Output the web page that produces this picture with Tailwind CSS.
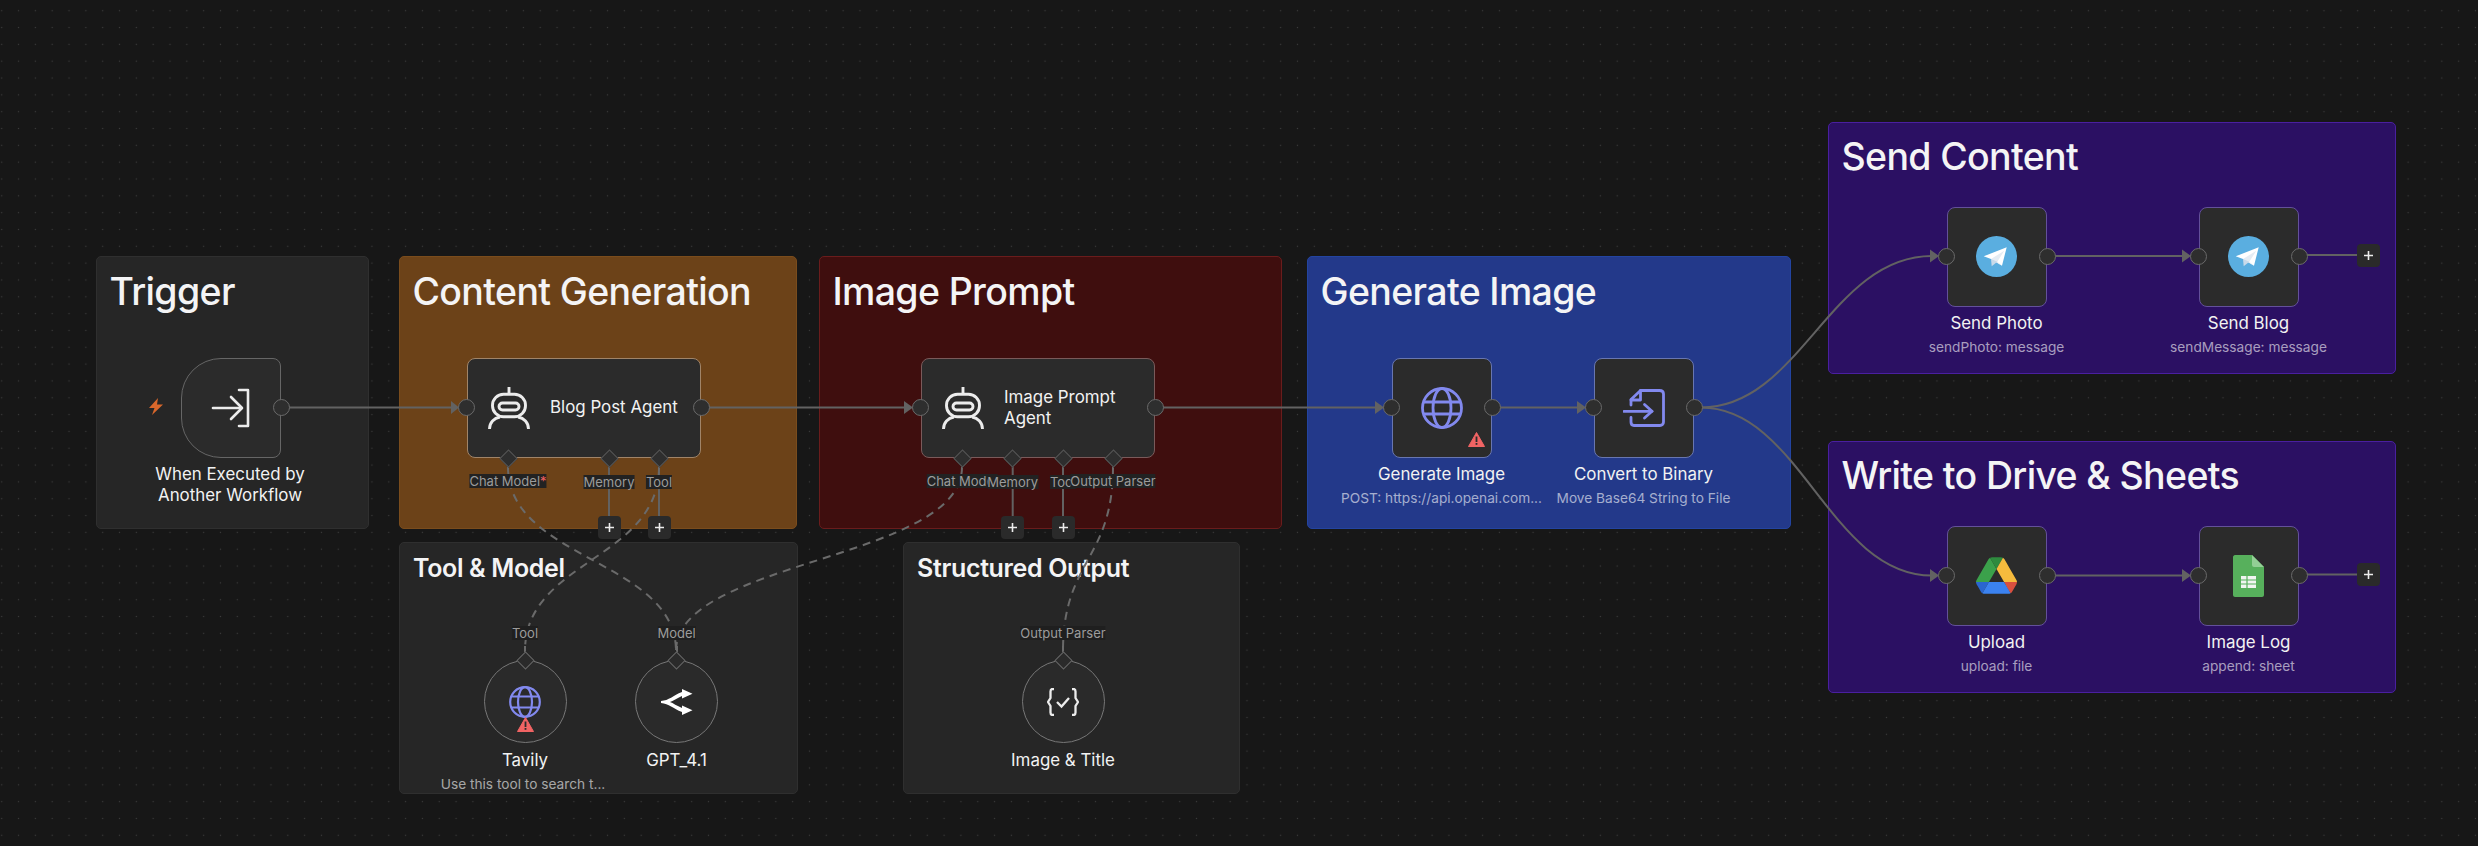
<!DOCTYPE html>
<html>
<head>
<meta charset="utf-8">
<script src="https://cdn.jsdelivr.net/npm/@tailwindcss/browser@4"></script>
</head>
<body class="m-0 bg-[#171717]">
<div class="relative w-[2478px] h-[846px] overflow-hidden antialiased bg-[#171717] font-['Inter',sans-serif] bg-[radial-gradient(circle,#3c3c3c_0.9px,transparent_1px)] bg-[size:16.83px_16.83px] bg-[position:-6.7px_2.3px]">

  <!-- groups -->
  <div class="absolute left-[96px] top-[256px] w-[273px] h-[273px] rounded-[5px] bg-[#262626] border border-[#2f2f2f] px-[12.5px] pt-[12px]"><h1 class="text-[37.5px] leading-[45px] font-[550] tracking-[-0.65px] text-[#f4f4f5]">Trigger</h1></div>
  <div class="absolute left-[399px] top-[256px] w-[398px] h-[273px] rounded-[5px] bg-[#6c4218] border border-[#7a4c1c] px-[12.5px] pt-[12px]"><h1 class="text-[37.5px] leading-[45px] font-[550] tracking-[-0.65px] text-[#f4f4f5]">Content Generation</h1></div>
  <div class="absolute left-[819px] top-[256px] w-[463px] h-[273px] rounded-[5px] bg-[#3f0e0e] border border-[#6a1c1c] px-[12.5px] pt-[12px]"><h1 class="text-[37.5px] leading-[45px] font-[550] tracking-[-0.65px] text-[#f4f4f5]">Image Prompt</h1></div>
  <div class="absolute left-[1307px] top-[256px] w-[484px] h-[273px] rounded-[5px] bg-[#23398a] border border-[#2344a0] px-[12.5px] pt-[12px]"><h1 class="text-[37.5px] leading-[45px] font-[550] tracking-[-0.65px] text-[#f4f4f5]">Generate Image</h1></div>
  <div class="absolute left-[1828px] top-[122px] w-[568px] h-[252px] rounded-[5px] bg-[#2b1063] border border-[#4a1fa0] px-[12.5px] pt-[11px]"><h1 class="text-[37.5px] leading-[45px] font-[550] tracking-[-0.65px] text-[#f4f4f5]">Send Content</h1></div>
  <div class="absolute left-[1828px] top-[441px] w-[568px] h-[252px] rounded-[5px] bg-[#2b1063] border border-[#4a1fa0] px-[12.5px] pt-[11px]"><h1 class="text-[37.5px] leading-[45px] font-[550] tracking-[-0.65px] text-[#f4f4f5]">Write to Drive &amp; Sheets</h1></div>
  <div class="absolute left-[399px] top-[542px] w-[399px] h-[252px] rounded-[5px] bg-[#262626] border border-[#2f2f2f] px-[13px] pt-[9px]"><h2 class="text-[25px] leading-[32px] font-semibold tracking-[-0.35px] text-[#f4f4f5]">Tool &amp; Model</h2></div>
  <div class="absolute left-[903px] top-[542px] w-[337px] h-[252px] rounded-[5px] bg-[#262626] border border-[#2f2f2f] px-[13px] pt-[9px]"><h2 class="text-[25px] leading-[32px] font-semibold tracking-[-0.35px] text-[#f4f4f5]">Structured Output</h2></div>

  <!-- edges -->
  <svg class="absolute left-0 top-0" width="2478" height="846" viewBox="0 0 2478 846" fill="none">
    <g stroke="#626262" stroke-width="2">
      <path d="M281 407.5H452"/>
      <path d="M701 407.5H906"/>
      <path d="M1155 407.5H1376"/>
      <path d="M1491 407.5H1578"/>
      <path d="M1701 407.5C1800 407.5 1830 256 1932 256"/>
      <path d="M1701 407.5C1800 407.5 1830 575.5 1932 575.5"/>
      <path d="M2046 256H2184"/>
      <path d="M2046 575.5H2184"/>
      <path d="M2299 255H2358"/>
      <path d="M2299 574.5H2358"/>
      <path d="M609 467V517"/><path d="M659 467V517"/>
      <path d="M1012.7 467V517"/><path d="M1063 467V517"/>
      <g stroke-dasharray="8 6" stroke="#6a6a6a">
        <path d="M508 467C508 560 676 560 676 651"/>
        <path d="M659 467C659 560 525 560 525 651"/>
        <path d="M962 467C962 560 676 560 676 651"/>
        <path d="M1113 467C1113 560 1063 560 1063 651"/>
      </g>
    </g>
    <g fill="#626262">
      <path d="M451 401L459 407.5L451 414Z"/>
      <path d="M904 401L913 407.5L904 414Z"/>
      <path d="M1375 401L1384 407.5L1375 414Z"/>
      <path d="M1577 401L1586 407.5L1577 414Z"/>
      <path d="M1930 249.5L1939 256L1930 262.5Z"/>
      <path d="M1930 569L1939 575.5L1930 582Z"/>
      <path d="M2182 249.5L2191 256L2182 262.5Z"/>
      <path d="M2182 569L2191 575.5L2182 582Z"/>
    </g>
  </svg>

  <!-- trigger -->
  <svg class="absolute left-[147.5px] top-[398px]" width="16" height="17" viewBox="0 0 16 17"><path d="M10 0L1 10H6.5L4 17L15 6.5H9Z" fill="#d9672b"/></svg>
  <div class="absolute left-[180.5px] top-[357.5px] w-[100.5px] h-[100px] flex items-center justify-center bg-[#2b2b2b] border-[1.5px] border-[#666] rounded-l-[40px] rounded-r-[8px]">
    <svg width="40" height="40" viewBox="0 0 40 40" fill="none" stroke="#ececec" stroke-width="2.6" stroke-linecap="round" stroke-linejoin="round"><path d="M2 20H29"/><path d="M20 9L31 20L20 31"/><path d="M28 2H37V38H28"/></svg>
    <span class="absolute right-[-10px] top-[40.5px] w-[17px] h-[17px] rounded-full bg-[#2e2e2e] border border-[#6a6a6a]"></span>
  </div>
  <div class="absolute left-[110px] top-[464px] w-[240px] text-center text-[16.9px] leading-[21px] text-[#f2f2f2]">When Executed by<br>Another Workflow</div>

  <!-- blog agent -->
  <div class="absolute left-[467px] top-[357.5px] w-[234px] h-[100px] flex items-center bg-[#2b2b2b] border-[1.5px] border-[#a08468] rounded-[8px]">
    <svg class="ml-[20px]" width="42" height="42" viewBox="0 0 42 42" fill="none" stroke="#ececec" stroke-width="2.9"><path d="M21 0V6"/><rect x="4.5" y="7.2" width="33" height="22.5" rx="11"/><rect x="11" y="16" width="20" height="7" rx="3.5"/><path d="M1.5 42C1.5 35.5 6 31 12 30"/><path d="M40.5 42C40.5 35.5 36 31 30 30"/></svg>
    <span class="ml-[20px] text-[16.9px] leading-[21px] text-[#f2f2f2]">Blog Post Agent</span>
    <span class="absolute left-[-10px] top-[40.5px] w-[17px] h-[17px] rounded-full bg-[#2e2e2e] border border-[#6a6a6a]"></span>
    <span class="absolute right-[-10px] top-[40.5px] w-[17px] h-[17px] rounded-full bg-[#2e2e2e] border border-[#6a6a6a]"></span>
  </div>
  <!-- image agent -->
  <div class="absolute left-[921px] top-[357.5px] w-[234px] h-[100px] flex items-center bg-[#2b2b2b] border-[1.5px] border-[#7a5a5a] rounded-[8px]">
    <svg class="ml-[20px]" width="42" height="42" viewBox="0 0 42 42" fill="none" stroke="#ececec" stroke-width="2.9"><path d="M21 0V6"/><rect x="4.5" y="7.2" width="33" height="22.5" rx="11"/><rect x="11" y="16" width="20" height="7" rx="3.5"/><path d="M1.5 42C1.5 35.5 6 31 12 30"/><path d="M40.5 42C40.5 35.5 36 31 30 30"/></svg>
    <span class="ml-[20px] text-[16.9px] leading-[21px] text-[#f2f2f2]">Image Prompt<br>Agent</span>
    <span class="absolute left-[-10px] top-[40.5px] w-[17px] h-[17px] rounded-full bg-[#2e2e2e] border border-[#6a6a6a]"></span>
    <span class="absolute right-[-10px] top-[40.5px] w-[17px] h-[17px] rounded-full bg-[#2e2e2e] border border-[#6a6a6a]"></span>
  </div>

  <!-- diamonds -->
  <span class="absolute left-[501.5px] top-[451.5px] w-[13px] h-[13px] rotate-45 bg-[#2e2e2e] border border-[#555]"></span>
  <span class="absolute left-[602.5px] top-[451.5px] w-[13px] h-[13px] rotate-45 bg-[#2e2e2e] border border-[#555]"></span>
  <span class="absolute left-[652.5px] top-[451.5px] w-[13px] h-[13px] rotate-45 bg-[#2e2e2e] border border-[#555]"></span>
  <span class="absolute left-[955.5px] top-[451.5px] w-[13px] h-[13px] rotate-45 bg-[#2e2e2e] border border-[#555]"></span>
  <span class="absolute left-[1006px] top-[451.5px] w-[13px] h-[13px] rotate-45 bg-[#2e2e2e] border border-[#555]"></span>
  <span class="absolute left-[1056.5px] top-[451.5px] w-[13px] h-[13px] rotate-45 bg-[#2e2e2e] border border-[#555]"></span>
  <span class="absolute left-[1106.5px] top-[451.5px] w-[13px] h-[13px] rotate-45 bg-[#2e2e2e] border border-[#555]"></span>

  <!-- port labels -->
  <span class="absolute left-[508px] top-[474px] -translate-x-1/2 whitespace-nowrap bg-[#222] text-[13px] leading-[14px] text-[#9c9c9c]">Chat Model<span class="text-[#f16060]">*</span></span>
  <span class="absolute left-[609px] top-[475px] -translate-x-1/2 whitespace-nowrap bg-[#222] text-[13px] leading-[14px] text-[#9c9c9c]">Memory</span>
  <span class="absolute left-[659px] top-[475px] -translate-x-1/2 whitespace-nowrap bg-[#222] text-[13px] leading-[14px] text-[#9c9c9c]">Tool</span>
  <span class="absolute left-[962px] top-[474px] -translate-x-1/2 whitespace-nowrap bg-[#222] text-[13px] leading-[14px] text-[#9c9c9c]">Chat Model</span>
  <span class="absolute left-[1012.7px] top-[475px] -translate-x-1/2 whitespace-nowrap bg-[#222] text-[13px] leading-[14px] text-[#9c9c9c]">Memory</span>
  <span class="absolute left-[1063px] top-[475px] -translate-x-1/2 whitespace-nowrap bg-[#222] text-[13px] leading-[14px] text-[#9c9c9c]">Tool</span>
  <span class="absolute left-[1113px] top-[474px] -translate-x-1/2 whitespace-nowrap bg-[#222] text-[13px] leading-[14px] text-[#9c9c9c]">Output Parser</span>

  <!-- plus boxes -->
  <div class="absolute left-[597.5px] top-[516px] w-[23px] h-[23px] rounded-[4px] bg-[#2a2a2a] flex items-center justify-center"><svg width="11" height="11" viewBox="0 0 11 11" stroke="#ececec" stroke-width="1.6"><path d="M5.5 1V10M1 5.5H10"/></svg></div>
  <div class="absolute left-[647.5px] top-[516px] w-[23px] h-[23px] rounded-[4px] bg-[#2a2a2a] flex items-center justify-center"><svg width="11" height="11" viewBox="0 0 11 11" stroke="#ececec" stroke-width="1.6"><path d="M5.5 1V10M1 5.5H10"/></svg></div>
  <div class="absolute left-[1001px] top-[516px] w-[23px] h-[23px] rounded-[4px] bg-[#2a2a2a] flex items-center justify-center"><svg width="11" height="11" viewBox="0 0 11 11" stroke="#ececec" stroke-width="1.6"><path d="M5.5 1V10M1 5.5H10"/></svg></div>
  <div class="absolute left-[1051.5px] top-[516px] w-[23px] h-[23px] rounded-[4px] bg-[#2a2a2a] flex items-center justify-center"><svg width="11" height="11" viewBox="0 0 11 11" stroke="#ececec" stroke-width="1.6"><path d="M5.5 1V10M1 5.5H10"/></svg></div>
  <div class="absolute left-[2357px] top-[243.5px] w-[23px] h-[23px] rounded-[4px] bg-[#2a2a2a] flex items-center justify-center"><svg width="11" height="11" viewBox="0 0 11 11" stroke="#ececec" stroke-width="1.6"><path d="M5.5 1V10M1 5.5H10"/></svg></div>
  <div class="absolute left-[2357px] top-[563px] w-[23px] h-[23px] rounded-[4px] bg-[#2a2a2a] flex items-center justify-center"><svg width="11" height="11" viewBox="0 0 11 11" stroke="#ececec" stroke-width="1.6"><path d="M5.5 1V10M1 5.5H10"/></svg></div>

  <!-- generate image -->
  <div class="absolute left-[1391.5px] top-[357.5px] w-[100px] h-[100px] flex items-center justify-center bg-[#2b2b2b] border-[1.5px] border-[#6876b0] rounded-[8px]">
    <svg width="42" height="42" viewBox="0 0 42 42" fill="none" stroke="#8289ee" stroke-width="2.8"><circle cx="21" cy="21" r="19.5"/><ellipse cx="21" cy="21" rx="9" ry="19.5"/><path d="M2 15H40M2 27H40"/></svg>
    <svg class="absolute left-[75px] top-[73px]" width="17" height="15" viewBox="0 0 17 15"><path d="M8.5 0.5L16.5 14.5H0.5Z" fill="#f16464" stroke="#f16464" stroke-linejoin="round"/><rect x="7.6" y="4.5" width="1.8" height="5.5" fill="#2b2b2b"/><rect x="7.6" y="11" width="1.8" height="1.8" fill="#2b2b2b"/></svg>
    <span class="absolute left-[-10px] top-[40.5px] w-[17px] h-[17px] rounded-full bg-[#2e2e2e] border border-[#6a6a6a]"></span>
    <span class="absolute right-[-10px] top-[40.5px] w-[17px] h-[17px] rounded-full bg-[#2e2e2e] border border-[#6a6a6a]"></span>
  </div>
  <div class="absolute left-[1321px] top-[464px] w-[241px] text-center text-[16.9px] leading-[21px] text-[#f2f2f2]">Generate Image</div>
  <div class="absolute left-[1321px] top-[489px] w-[241px] text-center text-[13.7px] leading-[18px] text-white/60">POST: https://api.openai.com...</div>

  <!-- convert -->
  <div class="absolute left-[1593.5px] top-[357.5px] w-[100px] h-[100px] flex items-center justify-center bg-[#2b2b2b] border-[1.5px] border-[#6876b0] rounded-[8px]">
    <svg width="42" height="38" viewBox="0 0 42 38" fill="none" stroke="#8289ee" stroke-width="2.8" stroke-linejoin="round" stroke-linecap="round"><path d="M8 16V10.5L17.5 1.5H36.5C39 1.5 40.5 3 40.5 5V33C40.5 35 39 36.5 37 36.5H11C9 36.5 8 35 8 33V28.5"/><path d="M8 11H17.5V1.5"/><path d="M1 22.3H29"/><path d="M21.5 15.5L29 22.3L21.5 29"/></svg>
    <span class="absolute left-[-10px] top-[40.5px] w-[17px] h-[17px] rounded-full bg-[#2e2e2e] border border-[#6a6a6a]"></span>
    <span class="absolute right-[-10px] top-[40.5px] w-[17px] h-[17px] rounded-full bg-[#2e2e2e] border border-[#6a6a6a]"></span>
  </div>
  <div class="absolute left-[1523px] top-[464px] w-[241px] text-center text-[16.9px] leading-[21px] text-[#f2f2f2]">Convert to Binary</div>
  <div class="absolute left-[1523px] top-[489px] w-[241px] text-center text-[13.7px] leading-[18px] text-white/60">Move Base64 String to File</div>

  <!-- send photo -->
  <div class="absolute left-[1946.5px] top-[206.5px] w-[100px] h-[100px] flex items-center justify-center bg-[#2b2b2b] border-[1.5px] border-[#63509a] rounded-[8px]">
    <svg width="41" height="41" viewBox="0 0 41 41"><circle cx="20.5" cy="20.5" r="20.5" fill="#5aaee0"/><path d="M30.7 11.3L7.7 20.3L15 23L26 29.7Z" fill="#fff"/><path d="M15 23L28.3 14.7L21.3 25.7L26 29.7Z" fill="#e4ecf3"/><path d="M15 23L15.7 30.3L21.3 25.7Z" fill="#c8daea"/></svg>
    <span class="absolute left-[-10px] top-[40.5px] w-[17px] h-[17px] rounded-full bg-[#2e2e2e] border border-[#6a6a6a]"></span>
    <span class="absolute right-[-10px] top-[40.5px] w-[17px] h-[17px] rounded-full bg-[#2e2e2e] border border-[#6a6a6a]"></span>
  </div>
  <div class="absolute left-[1876px] top-[313px] w-[241px] text-center text-[16.9px] leading-[21px] text-[#f2f2f2]">Send Photo</div>
  <div class="absolute left-[1876px] top-[338px] w-[241px] text-center text-[13.7px] leading-[18px] text-white/60">sendPhoto: message</div>

  <!-- send blog -->
  <div class="absolute left-[2198.8px] top-[206.5px] w-[100px] h-[100px] flex items-center justify-center bg-[#2b2b2b] border-[1.5px] border-[#63509a] rounded-[8px]">
    <svg width="41" height="41" viewBox="0 0 41 41"><circle cx="20.5" cy="20.5" r="20.5" fill="#5aaee0"/><path d="M30.7 11.3L7.7 20.3L15 23L26 29.7Z" fill="#fff"/><path d="M15 23L28.3 14.7L21.3 25.7L26 29.7Z" fill="#e4ecf3"/><path d="M15 23L15.7 30.3L21.3 25.7Z" fill="#c8daea"/></svg>
    <span class="absolute left-[-10px] top-[40.5px] w-[17px] h-[17px] rounded-full bg-[#2e2e2e] border border-[#6a6a6a]"></span>
    <span class="absolute right-[-10px] top-[40.5px] w-[17px] h-[17px] rounded-full bg-[#2e2e2e] border border-[#6a6a6a]"></span>
  </div>
  <div class="absolute left-[2128px] top-[313px] w-[241px] text-center text-[16.9px] leading-[21px] text-[#f2f2f2]">Send Blog</div>
  <div class="absolute left-[2128px] top-[338px] w-[241px] text-center text-[13.7px] leading-[18px] text-white/60">sendMessage: message</div>

  <!-- upload -->
  <div class="absolute left-[1946.5px] top-[525.5px] w-[100px] h-[100px] flex items-center justify-center bg-[#2b2b2b] border-[1.5px] border-[#63509a] rounded-[8px]">
    <svg width="41" height="37" viewBox="0 0 87.3 78"><path d="m6.6 66.85 3.85 6.65c.8 1.4 1.95 2.5 3.3 3.3l13.75-23.8h-27.5c0 1.55.4 3.1 1.2 4.5z" fill="#2a66d0"/><path d="m43.65 25-13.75-23.8c-1.35.8-2.5 1.9-3.3 3.3l-25.4 44a9.06 9.06 0 0 0 -1.2 4.5h27.5z" fill="#3ba14b"/><path d="m73.55 76.8c1.35-.8 2.5-1.9 3.3-3.3l1.6-2.75 7.65-13.25c.8-1.4 1.2-2.95 1.2-4.5h-27.502l5.852 11.5z" fill="#d9503f"/><path d="m43.65 25 13.75-23.8c-1.35-.8-2.9-1.2-4.5-1.2h-18.5c-1.6 0-3.15.45-4.5 1.2z" fill="#2e8b3e"/><path d="m59.8 53h-32.3l-13.75 23.8c1.35.8 2.9 1.2 4.5 1.2h50.8c1.6 0 3.15-.45 4.5-1.2z" fill="#3b82f0"/><path d="m73.4 26.5-12.7-22c-.8-1.4-1.95-2.5-3.3-3.3l-13.75 23.8 16.15 28h27.45c0-1.55-.4-3.1-1.2-4.5z" fill="#f6bb3d"/></svg>
    <span class="absolute left-[-10px] top-[40.5px] w-[17px] h-[17px] rounded-full bg-[#2e2e2e] border border-[#6a6a6a]"></span>
    <span class="absolute right-[-10px] top-[40.5px] w-[17px] h-[17px] rounded-full bg-[#2e2e2e] border border-[#6a6a6a]"></span>
  </div>
  <div class="absolute left-[1876px] top-[632px] w-[241px] text-center text-[16.9px] leading-[21px] text-[#f2f2f2]">Upload</div>
  <div class="absolute left-[1876px] top-[657px] w-[241px] text-center text-[13.7px] leading-[18px] text-white/60">upload: file</div>

  <!-- image log -->
  <div class="absolute left-[2198.8px] top-[525.5px] w-[100px] h-[100px] flex items-center justify-center bg-[#2b2b2b] border-[1.5px] border-[#63509a] rounded-[8px]">
    <svg width="31" height="42" viewBox="0 0 31 42"><path d="M2 0H19L31 12V40C31 41 30 42 29 42H2C1 42 0 41 0 40V2C0 1 1 0 2 0Z" fill="#57b05c"/><path d="M19 0L31 12H21C20 12 19 11 19 10Z" fill="#93cf95"/><path d="M8 21H23V33H8Z" fill="#f1f5f1"/><path d="M8 25H23M8 29H23M14 21V33" stroke="#57b05c" stroke-width="1.2"/></svg>
    <span class="absolute left-[-10px] top-[40.5px] w-[17px] h-[17px] rounded-full bg-[#2e2e2e] border border-[#6a6a6a]"></span>
    <span class="absolute right-[-10px] top-[40.5px] w-[17px] h-[17px] rounded-full bg-[#2e2e2e] border border-[#6a6a6a]"></span>
  </div>
  <div class="absolute left-[2128px] top-[632px] w-[241px] text-center text-[16.9px] leading-[21px] text-[#f2f2f2]">Image Log</div>
  <div class="absolute left-[2128px] top-[657px] w-[241px] text-center text-[13.7px] leading-[18px] text-white/60">append: sheet</div>

  <!-- tavily -->
  <span class="absolute left-[525px] top-[626px] -translate-x-1/2 whitespace-nowrap bg-[#1f1f1f] text-[13px] leading-[14px] text-[#9c9c9c]">Tool</span>
  <span class="absolute left-[524px] top-[646px] w-[2px] h-[6px] bg-[#6a6a6a]"></span>
  <div class="absolute left-[483.5px] top-[660px] w-[83px] h-[83px] rounded-full flex items-center justify-center bg-[#2a2a2a] border-[1.5px] border-[#777]">
    <svg width="32" height="32" viewBox="0 0 32 32" fill="none" stroke="#8289ee" stroke-width="2.2"><circle cx="16" cy="16" r="14.8"/><ellipse cx="16" cy="16" rx="7" ry="14.8"/><path d="M2 10.5H30M2 21.5H30"/></svg>
    <svg class="absolute left-[32.5px] top-[56px]" width="17" height="15" viewBox="0 0 17 15"><path d="M8.5 0.5L16.5 14.5H0.5Z" fill="#f16464" stroke="#f16464" stroke-linejoin="round"/><rect x="7.6" y="4.5" width="1.8" height="5.5" fill="#2b2b2b"/><rect x="7.6" y="11" width="1.8" height="1.8" fill="#2b2b2b"/></svg>
  </div>
  <span class="absolute left-[518.5px] top-[653.5px] w-[13px] h-[13px] rotate-45 bg-[#2a2a2a] border border-[#666]"></span>
  <div class="absolute left-[405px] top-[750px] w-[240px] text-center text-[16.9px] leading-[21px] text-[#f2f2f2]">Tavily</div>
  <div class="absolute left-[403px] top-[775px] w-[240px] text-center text-[13.7px] leading-[18px] text-white/60">Use this tool to search t...</div>

  <!-- gpt -->
  <span class="absolute left-[676.5px] top-[626px] -translate-x-1/2 whitespace-nowrap bg-[#1f1f1f] text-[13px] leading-[14px] text-[#9c9c9c]">Model</span>
  <span class="absolute left-[675.5px] top-[646px] w-[2px] h-[6px] bg-[#6a6a6a]"></span>
  <div class="absolute left-[635px] top-[660px] w-[83px] h-[83px] rounded-full flex items-center justify-center bg-[#2a2a2a] border-[1.5px] border-[#777]">
    <svg width="32" height="26" viewBox="0 0 32 26"><path d="M0 12C8 11.5 12 6.5 21 3L21 0L31.5 4.7L21 9.5L21 7C16 9 12 12 9 13C12 14 16 17 21 19L21 16.5L31.5 21.3L21 26L21 23C12 19.5 8 14.5 0 14Z" fill="#fff"/></svg>
  </div>
  <span class="absolute left-[670px] top-[653.5px] w-[13px] h-[13px] rotate-45 bg-[#2a2a2a] border border-[#666]"></span>
  <div class="absolute left-[556.5px] top-[750px] w-[240px] text-center text-[16.9px] leading-[21px] text-[#f2f2f2]">GPT_4.1</div>

  <!-- image title -->
  <span class="absolute left-[1063px] top-[626px] -translate-x-1/2 whitespace-nowrap bg-[#1f1f1f] text-[13px] leading-[14px] text-[#9c9c9c]">Output Parser</span>
  <span class="absolute left-[1062px] top-[646px] w-[2px] h-[6px] bg-[#6a6a6a]"></span>
  <div class="absolute left-[1021.5px] top-[660px] w-[83px] h-[83px] rounded-full flex items-center justify-center bg-[#2a2a2a] border-[1.5px] border-[#777]">
    <svg width="32" height="28" viewBox="0 0 32 28" fill="none" stroke="#ececec" stroke-width="2.3"><path d="M7 1H5.5C4 1 3.5 2 3.5 3.5V10L1 14L3.5 18V24.5C3.5 26 4 27 5.5 27H7"/><path d="M25 1H26.5C28 1 28.5 2 28.5 3.5V10L31 14L28.5 18V24.5C28.5 26 28 27 26.5 27H25"/><path d="M10 14L14.5 18.5L22 10"/></svg>
  </div>
  <span class="absolute left-[1056.5px] top-[653.5px] w-[13px] h-[13px] rotate-45 bg-[#2a2a2a] border border-[#666]"></span>
  <div class="absolute left-[943px] top-[750px] w-[240px] text-center text-[16.9px] leading-[21px] text-[#f2f2f2]">Image &amp; Title</div>
</div>
</body>
</html>
